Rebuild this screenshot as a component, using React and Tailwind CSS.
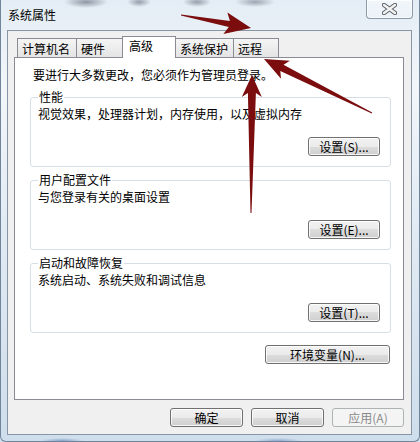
import React from 'react'

const FONT = "font-['Noto_Sans_CJK_SC','Noto_Sans_CJK_JP',sans-serif]"

// polygon points for a tapered arrow with swept-back barbs
function arrowPoints(tail, tip, headLen, headHalf, shaftTail, shaftHead, barb = 4) {
  const dx = tip[0] - tail[0]
  const dy = tip[1] - tail[1]
  const len = Math.hypot(dx, dy)
  const ux = dx / len
  const uy = dy / len
  const px = -uy
  const py = ux
  const bx = tip[0] - ux * headLen
  const by = tip[1] - uy * headLen
  const pts = [
    [tail[0] + (px * shaftTail) / 2, tail[1] + (py * shaftTail) / 2],
    [bx + (px * shaftHead) / 2 + ux * barb, by + (py * shaftHead) / 2 + uy * barb],
    [bx + px * headHalf, by + py * headHalf],
    tip,
    [bx - px * headHalf, by - py * headHalf],
    [bx - (px * shaftHead) / 2 + ux * barb, by - (py * shaftHead) / 2 + uy * barb],
    [tail[0] - (px * shaftTail) / 2, tail[1] - (py * shaftTail) / 2],
  ]
  return pts.map(p => p.map(v => v.toFixed(1)).join(',')).join(' ')
}

const tabs = [
  { label: '计算机名', w: 'w-[60px]' },
  { label: '硬件', w: 'w-[47px]' },
  { label: '高级', w: 'w-[54px]', active: true },
  { label: '系统保护', w: 'w-[59px]' },
  { label: '远程', w: 'w-[46px]' },
]

const groups = [
  { title: '性能', desc: '视觉效果，处理器计划，内存使用，以及虚拟内存', btn: '设置(S)...' },
  { title: '用户配置文件', desc: '与您登录有关的桌面设置', btn: '设置(E)...' },
  { title: '启动和故障恢复', desc: '系统启动、系统失败和调试信息', btn: '设置(T)...' },
]

function Button({ children, className = '', disabled }) {
  if (disabled) {
    return (
      <div className={`h-[19px] flex items-center justify-center rounded-[3px] border border-[#adb2b5] bg-[#f4f4f4] text-[12px] leading-[14px] text-[#8a8a8a] ${className}`}>
        {children}
      </div>
    )
  }
  return (
    <div className={`h-[19px] flex items-center justify-center rounded-[3px] border border-[#707070] bg-[linear-gradient(#f2f2f2_0%,#ebebeb_50%,#dddddd_50%,#cfcfcf_100%)] shadow-[inset_0_0_0_1px_rgba(255,255,255,0.8)] text-[12px] leading-[14px] text-black ${className}`}>
      {children}
    </div>
  )
}

function GroupBox({ title, desc, btn }) {
  return (
    <fieldset className="border border-[#d5dfe5] rounded-[3px] pl-[7px] pr-[10px] pb-[10px] shadow-[inset_0_0_0_1px_#ffffff]">
      <legend className="px-[1px] text-[12px] leading-[14px] text-black">{title}</legend>
      <div className="text-[12px] leading-[15px] text-black mt-[2px]">{desc}</div>
      <div className="flex justify-end mt-[16px]">
        <Button className="w-[72px]">{btn}</Button>
      </div>
    </fieldset>
  )
}

export default function App() {
  return (
    <div
      className={`relative w-[420px] h-[442px] overflow-hidden ${FONT} bg-[radial-gradient(ellipse_22px_6px_at_86px_2px,rgba(70,80,95,0.55),transparent),radial-gradient(ellipse_12px_5px_at_139px_2px,rgba(70,80,95,0.5),transparent),radial-gradient(ellipse_14px_5px_at_197px_2px,rgba(70,80,95,0.5),transparent),radial-gradient(ellipse_20px_5px_at_255px_2px,rgba(70,80,95,0.45),transparent),radial-gradient(ellipse_22px_3px_at_62px_441px,rgba(60,100,170,0.5),transparent),radial-gradient(ellipse_24px_3px_at_278px_441px,rgba(60,100,170,0.45),transparent),linear-gradient(#e4edf5,#f2f6fa_20%,#dde8f2_60%,#cfdeec)]`}
    >
      <div className="flex flex-col h-full pl-[6px] pr-[7px] pb-[6px] border-l border-r border-b border-[#71859a] rounded-b-[6px]">
        {/* title bar */}
        <div className="h-[30px] flex items-start justify-between">
          <div className="pt-[8px] pl-[1px] text-[12px] leading-[14px] text-black">系统属性</div>
          <div className="w-[47px] h-[19px] -mr-[1px] flex items-center justify-center rounded-b-[4px] border border-t-0 border-[#8b9aab] bg-[linear-gradient(rgba(255,255,255,0.5),rgba(235,242,248,0.8))] shadow-[inset_0_0_0_1px_rgba(255,255,255,0.7)]">
            <svg width="15" height="12" viewBox="0 0 15 12">
              <path d="M2 2 L13 10 M13 2 L2 10" stroke="#5d6268" strokeWidth="4.4" strokeLinecap="round" fill="none" />
              <path d="M2 2 L13 10 M13 2 L2 10" stroke="#f4f4f4" strokeWidth="2.4" strokeLinecap="round" fill="none" />
            </svg>
          </div>
        </div>

        {/* client area */}
        <div className="flex-1 flex flex-col border border-[#8795a5] bg-[#f0f0f0] pl-[6px] pr-[7px] pt-[5px] pb-[7px]">
          {/* tabs */}
          <div className="flex items-end h-[21px] pl-[3px]">
            {tabs.map((t, i) =>
              t.active ? (
                <div
                  key={t.label}
                  className={`${t.w} h-[22px] -mb-px -ml-px relative z-10 border border-b-0 border-[#898c95] bg-white pl-[6px] pt-[2px] text-[12px] leading-[14px] text-black`}
                >
                  {t.label}
                </div>
              ) : (
                <div
                  key={t.label}
                  className={`${t.w} h-[19px] ${i > 0 ? '-ml-px' : ''} border border-b-0 border-[#898c95] bg-[linear-gradient(#f5f5f5,#e4e4e4)] pl-[4px] pt-[3px] text-[12px] leading-[14px] text-black`}
                >
                  {t.label}
                </div>
              )
            )}
          </div>

          {/* tab panel */}
          <div className="flex-1 flex flex-col border border-[#898c95] bg-white pt-[9px] pl-[15px] pr-[12px]">
            <div className="pl-[3px] text-[12px] leading-[16px] text-black">要进行大多数更改，您必须作为管理员登录。</div>
            <div className="flex flex-col gap-[6px] mt-[7px]">
              {groups.map(g => (
                <GroupBox key={g.title} {...g} />
              ))}
            </div>
            <div className="flex justify-end mt-[12px] pr-[1px]">
              <Button className="w-[125px]">环境变量(N)...</Button>
            </div>
          </div>

          {/* dialog buttons */}
          <div className="flex justify-end gap-[8px] pt-[8px]">
            <Button className="w-[73px]">确定</Button>
            <Button className="w-[73px]">取消</Button>
            <Button className="w-[72px]" disabled>应用(A)</Button>
          </div>
        </div>
      </div>

      {/* red annotation arrows */}
      <svg className="absolute inset-0 pointer-events-none" width="420" height="442" viewBox="0 0 420 442">
        <g fill="#7b0d0f">
          <polygon points={arrowPoints([181, 15], [251, 28], 26, 11, 1, 6)} />
          <polygon points={arrowPoints([372, 113], [264, 59], 24, 10, 1, 7)} />
          <polygon points={arrowPoints([251, 213], [252, 75], 22, 10, 1, 8)} />
        </g>
      </svg>
    </div>
  )
}
